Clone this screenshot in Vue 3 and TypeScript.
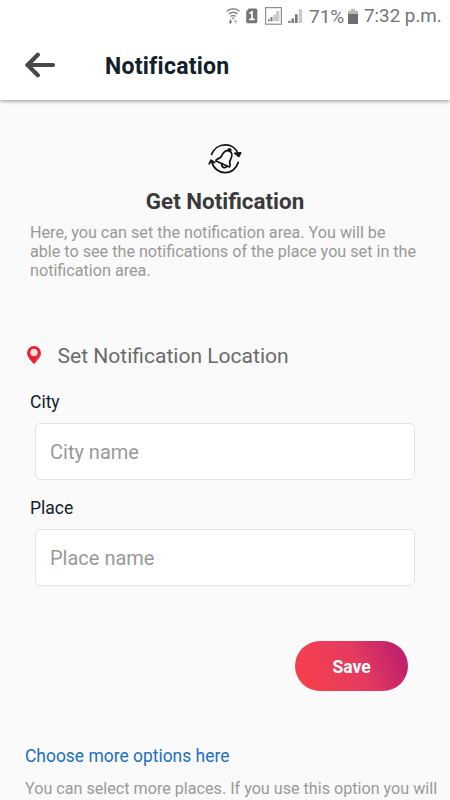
<script setup lang="ts">
import { ref } from 'vue'

interface Field {
  id: string
  label: string
  placeholder: string
}

const fields: Field[] = [
  { id: 'city', label: 'City', placeholder: 'City name' },
  { id: 'place', label: 'Place', placeholder: 'Place name' },
]

const values = ref<Record<string, string>>({ city: '', place: '' })
</script>

<template>
  <div class="screen">
    <header class="top">
      <div class="status">
        <svg class="status-icons" width="80" height="20" viewBox="0 0 80 20">
          <g fill="none" stroke="#858585" stroke-width="1.5">
            <path d="M1 5.2Q7.2.4 13.4 5.2" />
            <path d="M2.8 8Q7.2 4.4 11.6 8" />
            <path d="M4.7 10.5Q7.2 8.4 9.7 10.5" />
          </g>
          <circle cx="7.2" cy="12.2" r="1" fill="#858585" />
          <path d="M3.8 13.6h1.4v2h1.3L4.5 17.9 2.5 15.6h1.3z" fill="#777" />
          <path d="M8.8 17.6h1.4v-2h1.3L9.5 13.4 7.5 15.6h1.3z" fill="#bbb" />
          <path d="M22.8 2.6h6.8q1.7 0 1.7 1.7v11.2q0 1.7-1.7 1.7h-7.7q-1.7 0-1.7-1.7V5.4z" fill="#757575" />
          <path d="M23.4 7.4 26 6V13.4M23.2 13.4h5.4" fill="none" stroke="#fff" stroke-width="1.7" />
          <rect x="39.6" y="1.6" width="15.8" height="16.6" fill="#fff" stroke="#8e8e8e" stroke-width="1.2" />
          <path d="M42 15.2h1.8v-2H42zM44.5 15.2h2v-4.2h-2z" fill="#777" />
          <path d="M47.2 15.2V8.6h2.9v6.6zM50.1 15.2V5h3.3v10.2z" fill="#c9c9c9" />
          <path d="M62.3 17v-2.2h2.3V17zM65.5 17v-4.6h2.4V17zM69 17V8.3h2.6V17z" fill="#757575" />
          <path d="M72.8 17V3.2h3.3V17z" fill="#c9c9c9" />
        </svg>
        <span class="percent">71%</span>
        <svg class="battery" width="10" height="15" viewBox="0 0 10 15">
          <path d="M3 0h4v1.7h3V6H0V1.7h3z" fill="#b9b9b9" />
          <path d="M0 5h10v10H0z" fill="#6e6e6e" />
        </svg>
        <span class="clock">7:32 p.m.</span>
      </div>
      <div class="bar">
        <svg class="back" width="32" height="26" viewBox="0 0 32 26" aria-label="Back">
          <path d="M2.2 13H28M12.8 2.8 2.6 13l10.2 10.2" fill="none" stroke="#484848" stroke-width="4.2" stroke-linecap="round" stroke-linejoin="round" />
        </svg>
        <h1>Notification</h1>
      </div>
    </header>

    <main>
      <section class="intro">
        <svg class="bell" width="36" height="32" viewBox="0 0 36 32">
          <g fill="none" stroke="#151515" stroke-width="1.8" stroke-linecap="round" stroke-linejoin="round">
            <path d="M4.6 11.4C9-.9 27.4-1.5 31.2 11.4" />
            <path d="M27.8 10.4 31.8 13.4 33.6 9.8Z" />
            <path d="M31.2 19.4C27.2 33.2 8.4 33.4 4.6 18.2" />
            <path d="M2.2 20.8 4 17.2 7.6 19.6" />
            <path d="M22.4 7.9C17.2 6.6 15.7 11.1 14 13.9 12.5 15.9 8.6 15.6 9 18L22.4 24C24.2 23.1 22.2 20.6 22.8 18.2 24.2 15.2 27.2 10.3 22.4 7.9Z" />
            <path d="M14.8 21C14.2 24.3 18.4 26 20 23.1M21 7.5 21.8 5.9 23.8 6.7 23.2 8.3" />
          </g>
        </svg>
        <h2>Get Notification</h2>
        <p>Here, you can set the notification area. You will be<br>able to see the notifications of the place you set in the<br>notification area.</p>
      </section>

      <div class="location">
        <svg width="14" height="18" viewBox="0 0 14 18">
          <path d="M7 0a6.9 6.9 0 0 1 6.9 6.9C13.9 11 9.6 15 7 18 4.4 15 .1 11 .1 6.9A6.9 6.9 0 0 1 7 0z" fill="#ed1c2e" />
          <path d="M7 18c2.6-3 6.9-7 6.9-11.1L10 10z" fill="#e83b4a" />
          <circle cx="7" cy="6.5" r="3.7" fill="#fbe0dc" />
        </svg>
        <span>Set Notification Location</span>
      </div>

      <form @submit.prevent>
        <div v-for="f in fields" :key="f.id" class="field">
          <label :for="f.id">{{ f.label }}</label>
          <input :id="f.id" v-model="values[f.id]" type="text" :placeholder="f.placeholder">
        </div>
        <button type="submit">Save</button>
      </form>

      <a class="more">Choose more options here</a>
      <p class="note">You can select more places. If you use this option you will</p>
    </main>
  </div>
</template>

<style>
body {
  margin: 0;
  overflow: hidden;
}
</style>

<style scoped>
.screen {
  width: 450px;
  height: 800px;
  overflow: hidden;
  background: #fafafa;
  font-family: Roboto, "Liberation Sans", sans-serif;
}
.screen * {
  box-sizing: border-box;
}
.top {
  position: relative;
  height: 100px;
  background: #fff;
  box-shadow: 0 1px 4px rgba(0, 0, 0, 0.42);
}
.status {
  display: flex;
  align-items: center;
  height: 32px;
  padding-left: 226px;
  font-size: 19px;
  color: #757575;
  white-space: nowrap;
}
.percent {
  margin-left: 3px;
  width: 36px;
}
.battery {
  margin: 1px 6px 0 3px;
}
.clock {
  font-size: 18.8px;
}
.bar {
  display: flex;
  align-items: center;
  height: 68px;
  padding-left: 25px;
}
.back {
  margin-top: -2px;
}
h1 {
  margin: 2px 0 0 48px;
  font-size: 23px;
  font-weight: 700;
  line-height: 28px;
  letter-spacing: 0.25px;
  color: #13202b;
}
.intro {
  padding-top: 43px;
  display: flex;
  flex-direction: column;
  align-items: center;
}
h2 {
  margin: 12px 0 0;
  font-size: 22.4px;
  font-weight: 700;
  line-height: 28px;
  color: #3a3a3a;
}
.intro p {
  align-self: stretch;
  margin: 9px 0 0 30px;
  font-size: 16.16px;
  line-height: 18.75px;
  color: #999;
  white-space: nowrap;
}
.location {
  display: flex;
  align-items: center;
  gap: 16.5px;
  height: 28px;
  margin: 62px 0 0 27px;
  font-size: 21.05px;
  color: #6b6b6b;
}
.location svg {
  margin-top: -2px;
}
.location span {
  margin-top: -2px;
}
form {
  display: flex;
  flex-direction: column;
  padding: 22px 35px 0;
}
.field {
  display: flex;
  flex-direction: column;
  height: 106px;
}
label {
  margin-left: -5px;
  font-size: 17.5px;
  line-height: 20px;
  color: #13202b;
}
input {
  height: 57px;
  margin-top: 11px;
  padding: 1px 14px 0;
  border: 1px solid #e3e3e3;
  border-radius: 5px;
  outline: 0;
  background: #fff;
  font: 20px Roboto, "Liberation Sans", sans-serif;
  color: #333;
}
input::placeholder {
  color: #999;
  opacity: 1;
}
button {
  align-self: flex-end;
  width: 113px;
  height: 50px;
  margin: 37px 7px 0 0;
  padding: 1px 0 0;
  border: 0;
  border-radius: 25px;
  background: linear-gradient(65deg, #f43f4e 15%, #e63b60 54%, #c0216b 90%);
  font: 700 17.5px Roboto, "Liberation Sans", sans-serif;
  color: #fff;
}
.more {
  display: block;
  margin: 54px 0 0 25px;
  font-size: 17.45px;
  line-height: 22px;
  color: #1a6fc0;
}
.note {
  margin: 12px 0 0 25px;
  font-size: 16.15px;
  line-height: 20px;
  color: #999;
  white-space: nowrap;
}
</style>
